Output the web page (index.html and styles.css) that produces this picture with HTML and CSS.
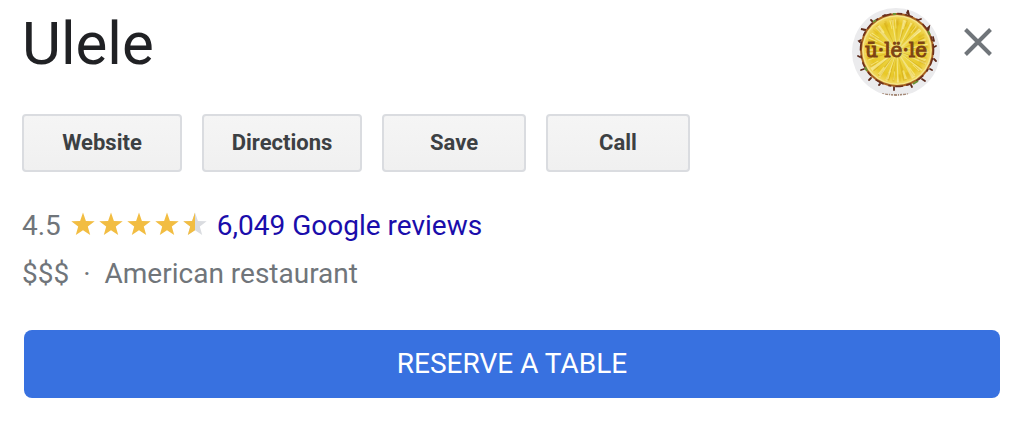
FILE: index.html
```html
<!DOCTYPE html>
<html lang="en">
<head>
<meta charset="utf-8">
<meta name="viewport" content="width=device-width, initial-scale=1">
<title>Ulele</title>
<link rel="stylesheet" href="styles.css">
</head>
<body>
<main class="panel">
  <header class="header">
    <h1 class="title">Ulele</h1>
    <svg class="logo" viewBox="0 0 88 88" role="img" aria-label="Ulele logo">
      <defs>
        <clipPath id="disc"><circle cx="44" cy="44" r="44"/></clipPath>
        <radialGradient id="flesh">
          <stop offset="0" stop-color="#f4ea90"/>
          <stop offset=".35" stop-color="#ecd442"/>
          <stop offset=".8" stop-color="#e8c828"/>
          <stop offset="1" stop-color="#f1d75c"/>
        </radialGradient>
      </defs>
      <g clip-path="url(#disc)">
        <rect width="88" height="88" fill="#ebebed"/>
        <path fill="none" stroke="#5c2a1c" stroke-width="1.8" stroke-linecap="round" d="M31 8l2-1M55 5l1-2 1 4M66 12l3-1M75 21l2-2-1 5M81 29l1 4M82 39l2-1M82 51l2 2M78 61l2 1M70 71l3 2M59 77l1 2M42 79l0 3M28 76l-1 1M19 70l-2 2M12 61l-3 1M8 49l-2-1M8 34l-1-1 2-1M12 22l-3-1 5 1M21 14l-2-2"/>
        <circle cx="45" cy="42" r="37" fill="#a8621f"/>
        <circle cx="45" cy="42" r="36.500" fill="none" stroke="#6b2f1c" stroke-width="1.6" stroke-dasharray="5 3 8 4 3 5 9 6"/>
        <g fill="none" stroke="#6b9235" stroke-width="2">
          <path d="M41 6l3 0M21 14l3-2M61 76l5-3M13 59l2 4M76 23l2 4"/>
        </g>
        <circle cx="45" cy="42" r="35" fill="#f5e58b"/>
        <circle cx="45" cy="42" r="33.500" fill="url(#flesh)"/>
        <g fill="none">
          <circle cx="45" cy="43" r="17" stroke="#cfa512" stroke-width="27" stroke-opacity=".5" stroke-dasharray="1 4 2 3 1 6 1 3 2 5 1 2"/>
          <circle cx="45" cy="43" r="16" stroke="#fbf4b0" stroke-width="31" stroke-opacity=".6" stroke-dasharray="1 5 1 3 1 4 2 7"/>
          <circle cx="45" cy="42" r="28" stroke="#d4a717" stroke-width="7" stroke-opacity=".3" stroke-dasharray="2 5 1 3 3 6"/>
          <circle cx="45" cy="42" r="26" stroke="#fff5a0" stroke-width="9" stroke-opacity=".6" stroke-dasharray="1 7 2 9 1 4"/>
        </g>
        <text class="logo-text" x="44" y="49" text-anchor="middle">ū·lë·lē</text>
        <path fill="none" stroke="#a58a78" stroke-width="2" stroke-dasharray="2 1 3 1 1 1" d="M30 86q14 2 27 0"/>
      </g>
    </svg>
    <button class="close" type="button" aria-label="Close">
      <svg class="close-icon" viewBox="0 0 28 28" aria-hidden="true"><path d="M1.500 1.500l25 25M26.500 1.500l-25 25"/></svg>
    </button>
  </header>

  <nav class="actions" aria-label="Actions">
    <button class="action action-wide" type="button">Website</button>
    <button class="action action-wide" type="button">Directions</button>
    <button class="action" type="button">Save</button>
    <button class="action" type="button">Call</button>
  </nav>

  <section class="details">
    <div class="line">
      <span>4.5</span>
      <svg class="stars" viewBox="0 0 140 28" role="img" aria-label="4.5 out of 5 stars">
        <defs>
          <path id="star" d="M14 .6L16.900 8.900 25.700 9.200 18.800 14.600 21.200 23.100 14 18.200 6.800 23.100 9.200 14.600 2.300 9.200 11.100 8.900z"/>
          <clipPath id="half"><rect width="14" height="28"/></clipPath>
        </defs>
        <g fill="#f2bd42">
          <use href="#star"/>
          <use href="#star" x="28"/>
          <use href="#star" x="56"/>
          <use href="#star" x="84"/>
        </g>
        <g transform="translate(112 0)">
          <use href="#star" fill="#dadce0"/>
          <use href="#star" fill="#f2bd42" clip-path="url(#half)"/>
        </g>
      </svg>
      <a class="reviews" href="#reviews">6,049 Google reviews</a>
    </div>
    <div class="line category"><span>$$$</span><span>·</span><span>American restaurant</span></div>
  </section>

  <button class="reserve" type="button">RESERVE A TABLE</button>
</main>
</body>
</html>
```
FILE: styles.css
```css
* {
  box-sizing: border-box;
}

body {
  margin: 0;
  background: #fff;
  color: #70757a;
  font-family: Roboto, "Liberation Sans", sans-serif;
}

button {
  font-family: inherit;
  cursor: pointer;
}

.panel {
  padding: 8px 22px 28px;
}

.header {
  display: flex;
  align-items: flex-start;
  height: 106px;
}

.title {
  flex: 1;
  margin: 0;
  color: #202124;
  font-size: 60px;
  font-weight: 400;
  line-height: 72px;
}

.logo {
  width: 88px;
  height: 88px;
}

.logo-text {
  fill: #7d4314;
  stroke: #7d4314;
  stroke-width: 1;
  font-family: "DejaVu Serif", serif;
  font-size: 20px;
}

.close {
  display: flex;
  margin: 12px 0 0 16px;
  padding: 8px;
  border: 0;
  background: none;
}

.close-icon {
  width: 28px;
  height: 28px;
  fill: none;
  stroke: #70757a;
  stroke-width: 4;
}

.actions {
  display: flex;
  gap: 20px;
}

.action {
  width: 144px;
  height: 58px;
  padding: 0 0 2px;
  border: 2px solid #dadce0;
  border-radius: 4px;
  background: linear-gradient(#f5f5f5, #f0f0f0);
  color: #3c4043;
  font-size: 22px;
  font-weight: 700;
}

.action-wide {
  width: 160px;
}

.details {
  padding: 30px 0 32px;
  font-size: 28px;
  line-height: 48px;
}

.line {
  display: flex;
  align-items: center;
}

.stars {
  width: 140px;
  height: 28px;
  margin: 0 8px;
}

.reviews {
  color: #1a0dab;
  text-decoration: none;
}

.category {
  gap: 14px;
}

.reserve {
  display: block;
  width: calc(100% - 2px);
  height: 68px;
  margin-left: 2px;
  padding: 0 0 2px;
  border: 0;
  border-radius: 8px;
  background: #3871e0;
  color: #fff;
  font-size: 28px;
}
```
